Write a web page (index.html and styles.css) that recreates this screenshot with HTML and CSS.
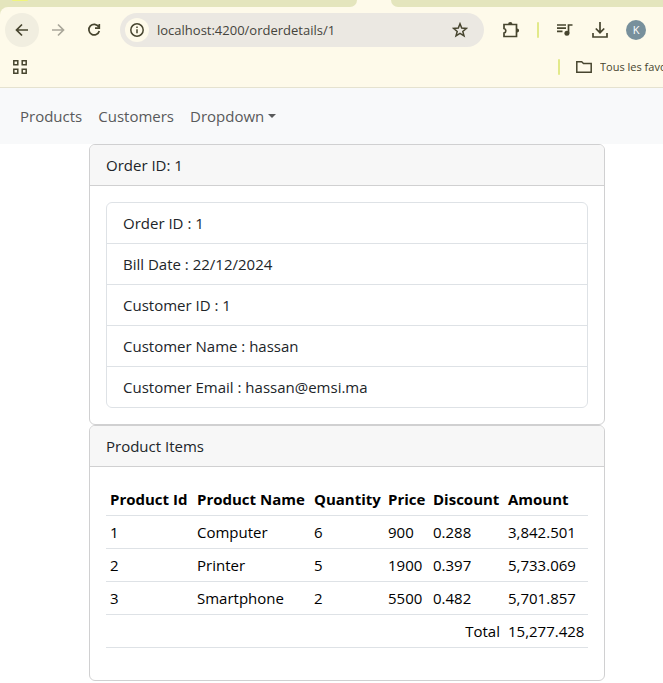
FILE: index.html
```html
<!DOCTYPE html>
<html lang="en">
<head>
<meta charset="utf-8">
<meta name="viewport" content="width=device-width, initial-scale=1">
<title>Order details</title>
<link rel="stylesheet" href="styles.css">
</head>
<body>
<header class="browser">
  <div class="tabs">
    <div class="tabs-before"><span class="tab-mark"></span></div>
    <div class="tab-active"></div>
    <div class="tabs-after"></div>
  </div>
  <div class="chrome">
    <div class="toolbar">
      <button class="round back" type="button" aria-label="Back">
        <svg width="16" height="16" viewBox="0 0 16 16"><path d="M14 8H3M8 2.500 2.500 8 8 13.500"/></svg>
      </button>
      <button class="round forward" type="button" aria-label="Forward">
        <svg width="16" height="16" viewBox="0 0 16 16"><path d="M2 8h11M8 2.500 13.500 8 8 13.500"/></svg>
      </button>
      <button class="round" type="button" aria-label="Reload">
        <svg width="16" height="16" viewBox="0 0 16 16"><path d="M12.700 4.800A5.300 5.300 0 1 0 13.300 9M13.300 2v4.200H9"/></svg>
      </button>
      <div class="address">
        <button class="info" type="button" aria-label="Site information">
          <svg width="16" height="16" viewBox="0 0 16 16"><circle cx="8" cy="8" r="6.200"/><path d="M8 7.200v4M8 4.400v1.700"/></svg>
        </button>
        <input class="url" type="text" aria-label="Address" value="localhost:4200/orderdetails/1">
        <button class="star" type="button" aria-label="Bookmark">
          <svg width="16" height="16" viewBox="0 0 16 16"><path d="m8 1.800 1.700 4.300 4.700.3-3.600 3 1.200 4.500L8 11.400l-4 2.500 1.200-4.500-3.600-3 4.700-.3z"/></svg>
        </button>
      </div>
      <div class="actions">
        <button class="icon" type="button" aria-label="Extensions">
          <svg width="18" height="18" viewBox="0 0 18 18"><path d="M2 3.500h12.500V15.500H2v-3.500a2.300 2.300 0 0 0 0-4.500z"/><path class="solid" d="M6.200 3a2.100 2.100 0 0 1 4.200 0zM15 7.400a2.100 2.100 0 0 1 0 4.200z"/></svg>
        </button>
        <span class="divider"></span>
        <button class="icon" type="button" aria-label="Media">
          <svg width="18" height="18" viewBox="0 0 18 18"><path d="M1 4h9M1 7.200h9M1 10.400h5.500M12.500 12.200V4h4"/><circle class="solid" cx="10.900" cy="12.200" r="2.500"/></svg>
        </button>
        <button class="icon" type="button" aria-label="Downloads">
          <svg width="18" height="18" viewBox="0 0 18 18"><path d="M9 1v10.500M4.800 7.500 9 11.700l4.200-4.200M2 12v4h14v-4"/></svg>
        </button>
        <button class="avatar" type="button">K</button>
      </div>
    </div>
    <div class="bookmarks">
      <button class="apps" type="button" aria-label="Apps">
        <svg width="16" height="16" viewBox="0 0 16 16"><path d="M1.800 1.800h4v4h-4zM10.200 1.800h4v4h-4zM1.800 10.200h4v4h-4zM10.200 10.200h4v4h-4z"/></svg>
      </button>
      <div class="favourites">
        <span class="divider"></span>
        <svg width="18" height="14" viewBox="0 0 18 14"><path d="M1.800 1.800h4.900l1.800 1.700h7.700v8.700H1.800z"/></svg>
        <button class="folder" type="button">Tous les favoris</button>
      </div>
    </div>
  </div>
</header>

<nav class="navbar">
  <a class="nav-link" href="#products">Products</a>
  <a class="nav-link" href="#customers">Customers</a>
  <a class="nav-link dropdown" href="#dropdown">Dropdown</a>
</nav>

<main class="page">
  <div class="container">
    <section class="card">
      <div class="card-header">Order ID: 1</div>
      <div class="card-body">
        <ul class="list">
          <li>Order ID : 1</li>
          <li>Bill Date : 22/12/2024</li>
          <li>Customer ID : 1</li>
          <li>Customer Name : hassan</li>
          <li>Customer Email : hassan@emsi.ma</li>
        </ul>
      </div>
    </section>
    <section class="card">
      <div class="card-header">Product Items</div>
      <div class="card-body">
        <table class="items">
          <colgroup>
            <col class="c-id"><col class="c-name"><col class="c-qty"><col class="c-price"><col class="c-discount"><col>
          </colgroup>
          <thead>
            <tr><th>Product Id</th><th>Product Name</th><th>Quantity</th><th>Price</th><th>Discount</th><th>Amount</th></tr>
          </thead>
          <tbody>
            <tr><td>1</td><td>Computer</td><td>6</td><td>900</td><td>0.288</td><td>3,842.501</td></tr>
            <tr><td>2</td><td>Printer</td><td>5</td><td>1900</td><td>0.397</td><td>5,733.069</td></tr>
            <tr><td>3</td><td>Smartphone</td><td>2</td><td>5500</td><td>0.482</td><td>5,701.857</td></tr>
            <tr><td class="total" colspan="5">Total</td><td>15,277.428</td></tr>
          </tbody>
        </table>
      </div>
    </section>
  </div>
</main>
</body>
</html>
```

FILE: styles.css
```css
* { box-sizing: border-box; }

body {
  margin: 0;
  background: #fff;
  color: #212529;
  font-family: "Segoe UI", "Open Sans", "Noto Sans", sans-serif;
  font-size: 15px;
  line-height: 24px;
  overflow-x: hidden;
}

button {
  display: flex;
  align-items: center;
  justify-content: center;
  flex: none;
  padding: 0;
  border: 0;
  background: none;
  color: inherit;
  font: inherit;
}

svg {
  display: block;
  flex: none;
  fill: none;
  stroke: currentColor;
  stroke-width: 1.7;
}

.solid { fill: currentColor; stroke: none; }

/* Browser frame */
.browser { background: #e4e5bd; color: #47452f; }

.tabs { display: flex; height: 7px; background: #fefaea; }
.tabs-before {
  width: 357px;
  padding-left: 12px;
  background: #e4e5bd;
  border-bottom-right-radius: 8px;
}
.tab-mark {
  display: block;
  width: 16px;
  height: 1px;
  background: #f0f57c;
  border-radius: 0 0 8px 8px;
}
.tab-active { width: 34px; }
.tabs-after { flex: 1; background: #e4e5bd; border-bottom-left-radius: 8px; }

.chrome {
  background: #fefaea;
  border-top-left-radius: 8px;
  border-bottom: 1px solid #e5e2d0;
}

.toolbar {
  display: flex;
  align-items: center;
  gap: 2px;
  padding: 6px 17px 0 5px;
}
.round { width: 34px; height: 34px; border-radius: 50%; }
.back { background: #f1eee0; }
.forward { color: #aaa79a; }

.address {
  display: flex;
  align-items: center;
  flex: 1;
  min-width: 0;
  height: 34px;
  margin-left: 7px;
  padding: 0 16px 0 5px;
  background: #ebe8e2;
  border-radius: 17px;
}
.info { width: 24px; height: 24px; border-radius: 50%; background: #fefaea; }
.info svg, .star svg, .apps svg { stroke-width: 1.5; }
.url {
  flex: 1;
  min-width: 0;
  padding: 0 8px;
  border: 0;
  background: none;
  color: #45443c;
  font: inherit;
  font-size: 13px;
  outline: 0;
}

.actions { display: flex; align-items: center; gap: 17px; margin-left: 16px; }
.divider { width: 2px; height: 16px; border-radius: 1px; background: #e2e98a; }
.avatar {
  width: 20px;
  height: 20px;
  border-radius: 50%;
  background: #78909c;
  color: #fff;
  font-size: 11px;
}

.bookmarks {
  display: flex;
  align-items: center;
  justify-content: space-between;
  height: 40px;
  padding-left: 12px;
}
.favourites { display: flex; align-items: center; }
.favourites svg { margin: 0 7px 0 15px; stroke-width: 1.5; }
.folder {
  justify-content: flex-start;
  width: 63px;
  overflow: hidden;
  font-size: 11px;
  white-space: nowrap;
}

/* Application */
.navbar { display: flex; padding: 8px 12px; background: #f8f9fa; }
.nav-link { padding: 8px; color: #595a5b; text-decoration: none; }
.dropdown { display: flex; align-items: center; gap: 4px; }
.dropdown::after {
  content: "";
  border: 4px solid transparent;
  border-top-color: currentColor;
  border-bottom: 0;
}

.page { padding-left: 31px; }
.container { max-width: 540px; margin: 0 auto; padding: 0 12px; }

.card { border: 1px solid #d0d0d1; border-radius: 6px; overflow: hidden; }
.card-header {
  padding: 8px 16px;
  background: #f7f7f7;
  border-bottom: 1px solid #d0d0d1;
}
.card-body { padding: 16px; }

.list {
  margin: 0;
  padding: 0;
  list-style: none;
  border: 1px solid #dee2e6;
  border-radius: 6px;
}
.list li { padding: 8px 16px; }
.list li + li { border-top: 1px solid #dee2e6; }

.items {
  width: 100%;
  margin-bottom: 16px;
  table-layout: fixed;
  border-collapse: collapse;
  color: #000;
}
.items th, .items td {
  padding: 4px;
  border-bottom: 1px solid #dee2e6;
  text-align: left;
  white-space: nowrap;
}
.items .total { text-align: right; }
.c-id { width: 87px; }
.c-name { width: 117px; }
.c-qty { width: 74px; }
.c-price { width: 45px; }
.c-discount { width: 75px; }
```
